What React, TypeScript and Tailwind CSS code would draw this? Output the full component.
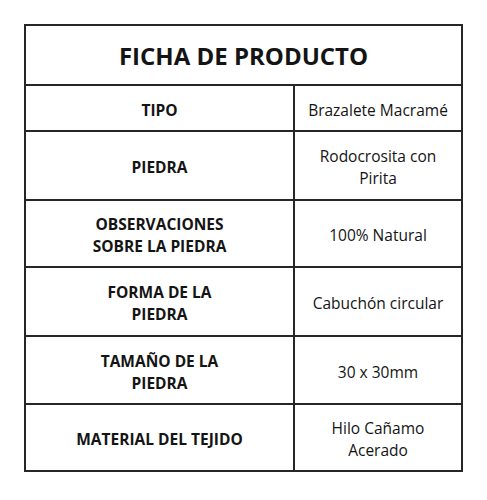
const rows: { label: string[]; value: string[]; h: string }[] = [
  { label: ["TIPO"], value: ["Brazalete Macramé"], h: "h-[44px]" },
  { label: ["PIEDRA"], value: ["Rodocrosita con", "Pirita"], h: "h-[67px]" },
  { label: ["OBSERVACIONES", "SOBRE LA PIEDRA"], value: ["100% Natural"], h: "h-[65px]" },
  { label: ["FORMA DE LA", "PIEDRA"], value: ["Cabuchón circular"], h: "h-[67px]" },
  { label: ["TAMAÑO DE LA", "PIEDRA"], value: ["30 x 30mm"], h: "h-[66px]" },
  { label: ["MATERIAL DEL TEJIDO"], value: ["Hilo Cañamo", "Acerado"], h: "h-[65px]" },
];

export default function App() {
  return (
    <div className="w-[487px] h-[500px] bg-white pt-[24px] pl-[24px] font-['Open_Sans',sans-serif] text-[#141414]">
      <div className="w-[439px] border-2 border-[#262626]">
        <div className="h-[58px] flex items-center justify-center">
          <h1 className="text-[24px] font-bold pt-[1px]">FICHA DE PRODUCTO</h1>
        </div>
        {rows.map((r, i) => (
          <div key={i} className={`grid grid-cols-[267px_168px] border-t-2 border-[#262626] box-content ${r.h}`}>
            <div className="flex items-center justify-center text-center text-[15.5px] font-bold leading-[22px] pt-[3px]">
              <span>
                {r.label.map((l, j) => (
                  <span key={j} className="block">{l}</span>
                ))}
              </span>
            </div>
            <div className="flex items-center justify-center text-center text-[15.5px] leading-[22px] border-l-2 border-[#262626] pt-[3px]">
              <span>
                {r.value.map((v, j) => (
                  <span key={j} className="block">{v}</span>
                ))}
              </span>
            </div>
          </div>
        ))}
      </div>
    </div>
  );
}
